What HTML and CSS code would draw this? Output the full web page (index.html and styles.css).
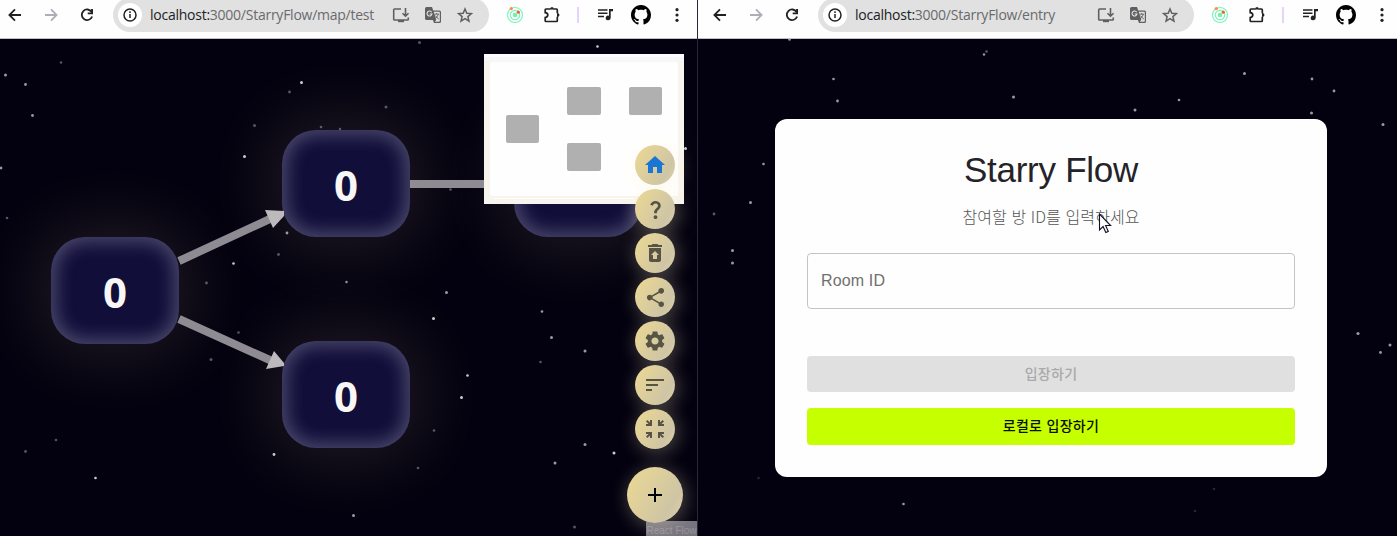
FILE: index.html
```html
<!DOCTYPE html>
<html lang="ko">
<head>
<meta charset="utf-8">
<title>Starry Flow</title>
<link rel="stylesheet" href="styles.css">
</head>
<body>
<svg width="0" height="0" class="defs" aria-hidden="true">
  <symbol id="back" viewBox="0 0 24 24"><path d="M18 12H6.8M12 6.400l-5.600 5.600 5.600 5.600" fill="none" stroke="currentColor" stroke-width="1.800"/></symbol>
  <symbol id="fwd" viewBox="0 0 24 24"><path d="M6 12h11.200M12 6.400l5.600 5.600-5.600 5.600" fill="none" stroke="currentColor" stroke-width="1.800"/></symbol>
  <symbol id="reload" viewBox="0 0 24 24"><path d="M16.600 9a5.300 5.300 0 1 0 .500 4.500" fill="none" stroke="currentColor" stroke-width="1.800"/><path d="M18 6v5.300h-5.300V9.500h3.400V6z" fill="currentColor"/></symbol>
  <symbol id="info" viewBox="0 0 24 24"><circle cx="12" cy="12" r="6" fill="none" stroke="currentColor" stroke-width="1.500"/><path d="M12 11v4M12 8.300v1.600" stroke="currentColor" stroke-width="1.500"/></symbol>
  <symbol id="install" viewBox="0 0 20 20"><path d="M10 4H3.500Q2.700 4 2.700 4.800v9.400q0 .8.8.8h13q.8 0 .8-.8V12.500M14.500 3v8M11.500 8.200l3 3 3-3" fill="none" stroke="currentColor" stroke-width="1.600"/><path d="M7 15h6v2.200H7z" fill="currentColor"/></symbol>
  <symbol id="translate" viewBox="0 0 20 20"><path d="M3.500 2H9l1.200 3.500H16.500q1.500 0 1.500 1.500v9.500q0 1.500-1.500 1.500H11L9.800 15H3.500Q2 15 2 13.500v-10Q2 2 3.500 2z" fill="currentColor"/><path d="M10.700 6.800h5.500q.6 0 .6.600v8.600q0 .7-.6.700h-4.300l1.400-1.900z" fill="#e0e0e0"/><path d="M8.700 7.200a2.500 2.500 0 1 0 .3 1.800H6.700" fill="none" stroke="#e8e8e8" stroke-width="1.100"/><path d="M11.500 9.200h4.600M13.700 8v1.200M15.300 9.400q-.7 2.600-3 4M12.700 10.700q1 2 3.200 3.400" fill="none" stroke="currentColor" stroke-width=".9"/></symbol>
  <symbol id="star" viewBox="0 0 20 20"><path d="M10 4l1.800 4.200 4.600.4-3.500 3 1.050 4.500L10 13.700l-3.950 2.400 1.050-4.500-3.500-3 4.600-.4z" fill="none" stroke="currentColor" stroke-width="1.500"/></symbol>
  <symbol id="orbit" viewBox="0 0 20 20"><g fill="none" stroke="#79f5bd" stroke-width="1.200"><circle cx="10" cy="10" r="7.500"/><circle cx="10" cy="10" r="4.700"/></g><circle cx="10" cy="10" r="2.300" fill="#6cf5a4"/><circle cx="6.300" cy="3.600" r="1.600" fill="#ff8a3c"/><circle cx="13.300" cy="7.200" r="1.600" fill="#f25c2e"/></symbol>
  <symbol id="puzzle" viewBox="0 0 20 20"><path d="M4 4h4.500M11.500 4h3q.8 0 .8.8v3.400M15.300 11.800v3.900q0 .8-.8.800H4q-.8 0-.8-.8v-3.200q2.600-.3 2.600-2.400T3.200 7.700V4.800Q3.200 4 4 4" fill="none" stroke="currentColor" stroke-width="1.700"/><path d="M8 4.500a2 2.500 0 0 1 4 0zM15 8a2.500 2 0 0 1 0 4z" fill="currentColor"/></symbol>
  <symbol id="music" viewBox="0 0 20 20"><path d="M3 5h9.500M3 8.300h9.500M3 11.600h6" stroke="currentColor" stroke-width="1.500"/><path d="M14 4h4v2.300h-2.300v6.500a2.500 2.300 0 1 1-1.700-2.100z" fill="currentColor"/></symbol>
  <symbol id="github" viewBox="0 0 16 16"><path fill="#000" d="M8 0C3.580 0 0 3.580 0 8c0 3.540 2.290 6.530 5.470 7.590.4.070.55-.17.55-.38 0-.19-.01-.82-.01-1.490-2.010.37-2.530-.49-2.690-.94-.09-.23-.48-.94-.82-1.130-.28-.15-.68-.52-.01-.53.63-.01 1.080.58 1.230.82.72 1.210 1.870.87 2.330.66.07-.52.28-.87.51-1.070-1.780-.2-3.640-.89-3.640-3.950 0-.87.31-1.590.82-2.150-.08-.2-.36-1.020.08-2.120 0 0 .67-.21 2.200.82.64-.18 1.320-.27 2-.27s1.360.09 2 .27c1.530-1.040 2.200-.82 2.200-.82.44 1.100.16 1.920.08 2.120.51.56.82 1.270.82 2.150 0 3.070-1.870 3.750-3.650 3.950.29.25.54.73.54 1.480 0 1.070-.01 1.930-.01 2.200 0 .21.15.46.55.38A8.010 8.010 0 0 0 16 8c0-4.420-3.580-8-8-8z"/></symbol>
  <symbol id="dots" viewBox="0 0 20 20"><g fill="currentColor"><circle cx="10" cy="4.700" r="1.600"/><circle cx="10" cy="10" r="1.600"/><circle cx="10" cy="15.300" r="1.600"/></g></symbol>
</svg>

<section class="window">
  <header class="toolbar">
    <svg class="nav"><use href="#back"/></svg><svg class="nav off"><use href="#fwd"/></svg><svg class="nav"><use href="#reload"/></svg>
    <div class="address">
      <svg class="site"><use href="#info"/></svg>
      <span class="url"><b>localhost:</b>3000/StarryFlow/map/test</span>
      <svg class="act"><use href="#install"/></svg><svg class="act"><use href="#translate"/></svg><svg class="act"><use href="#star"/></svg>
    </div>
    <div class="extras">
      <svg><use href="#orbit"/></svg><svg><use href="#puzzle"/></svg><i class="sep"></i><svg><use href="#music"/></svg><svg><use href="#github"/></svg><svg><use href="#dots"/></svg>
    </div>
  </header>
  <main class="sky map">
    <svg class="stars" viewBox="0 39 698 497">
      <g fill="#fff">
        <g opacity=".8"><circle cx="301.500" cy="82.500" r="1.500"/><circle cx="597.500" cy="46.500" r="1.300"/><circle cx="244.500" cy="156.500" r="1.500"/><circle cx="685.500" cy="148.500" r="1.500"/><circle cx="433.500" cy="318.500" r="1.500"/><circle cx="467.500" cy="375.500" r="1.300"/><circle cx="461.500" cy="397.500" r="1.500"/><circle cx="614" cy="453" r="1.500"/><circle cx="274" cy="454.500" r="1.400"/><circle cx="233.500" cy="263.500" r="1.300"/><circle cx="95.500" cy="478" r="1.300"/></g>
        <g opacity=".6"><circle cx="5.500" cy="75" r="1.500"/><circle cx="25.500" cy="84.500" r="1.400"/><circle cx="32.500" cy="115.500" r="1.400"/><circle cx="1" cy="168" r="1.400"/><circle cx="446.500" cy="292.500" r="1.500"/><circle cx="542" cy="311.500" r="1.300"/><circle cx="551.500" cy="337.500" r="1.500"/><circle cx="585" cy="351" r="1.500"/><circle cx="585" cy="444.500" r="1.500"/><circle cx="555" cy="463" r="1.500"/><circle cx="353.500" cy="515.500" r="1.500"/><circle cx="287" cy="233" r="1.400"/><circle cx="346.500" cy="282" r="1.200"/></g>
        <g opacity=".33"><circle cx="61" cy="62.500" r="1.300"/><circle cx="289.500" cy="92" r="1.400"/><circle cx="254.500" cy="125.500" r="1.500"/><circle cx="419.500" cy="42.500" r="1.500"/><circle cx="386" cy="107" r="1.500"/><circle cx="321" cy="127" r="1.300"/><circle cx="340" cy="129" r="1.200"/><circle cx="450.500" cy="189.500" r="1.300"/><circle cx="278.500" cy="254.500" r="1.400"/><circle cx="206.500" cy="283" r="1.400"/><circle cx="238.500" cy="332.500" r="1.300"/><circle cx="211" cy="359.500" r="1.500"/><circle cx="540.500" cy="362" r="1.300"/><circle cx="56" cy="440" r="1.300"/><circle cx="25.500" cy="451.500" r="1.400"/><circle cx="434" cy="430.500" r="1.300"/><circle cx="418" cy="468" r="1.300"/><circle cx="574.500" cy="527" r="1.500"/><circle cx="7" cy="218" r="1.300"/></g>
      </g>
    </svg>
    <div class="node n1">0</div><div class="node n2">0</div><div class="node n3">0</div><div class="node n4">0</div>
    <svg class="edges" viewBox="0 39 698 497">
      <g stroke="#8e8b93" stroke-width="8"><path d="M179 261L272 218M179 319L272 361M410 184H514"/></g>
      <path fill="#bcbabd" d="M265 210l19 1v5l-11 12zM274 351l10 12v3l-18 3z"/>
    </svg>
    <svg class="minimap" viewBox="0 0 200 150">
      <rect width="200" height="150" fill="#f8f5ee"/><path d="M0 0h200v3H0z" fill="#fdfdfd"/><path d="M0 3h200v4H0z" fill="#f7f7f9"/><rect x="6" y="8" width="188" height="134" rx="2" fill="#fefefe"/>
      <path d="M10 144.500h140" stroke="#fff" stroke-width="1"/>
      <g fill="#b0b0b0"><rect x="22" y="61" width="33" height="28" rx="2"/><rect x="83" y="33" width="34" height="28" rx="2"/><rect x="145" y="33" width="33" height="28" rx="2"/><rect x="83" y="89" width="34" height="28" rx="2"/></g>
    </svg>
    <span class="credit">React Flow</span>
    <div class="dial">
      <button class="fab home"><svg viewBox="0 0 24 24"><path d="M10 20v-6h4v6h5v-8h3L12 3 2 12h3v8z"/></svg></button>
      <button class="fab"><svg viewBox="0 0 24 24"><path d="M11.070 12.850c.77-1.390 2.250-2.210 3.110-3.440.91-1.290.4-3.700-2.180-3.700-1.690 0-2.520 1.280-2.870 2.340L6.540 6.960C7.250 4.830 9.180 3 11.990 3c2.350 0 3.960 1.070 4.780 2.410.7 1.150 1.110 3.300.03 4.900-1.200 1.770-2.350 2.310-2.970 3.450-.25.46-.35.76-.35 2.240h-2.890c-.01-.78-.13-2.050.48-3.150M14 20c0 1.100-.9 2-2 2s-2-.9-2-2 .9-2 2-2 2 .9 2 2"/></svg></button>
      <button class="fab"><svg viewBox="0 0 24 24"><path d="M6 7h12v12c0 1.100-.9 2-2 2H8c-1.100 0-2-.9-2-2zm4 7v4h4v-4h2l-4-4-4 4zM15.500 4l-1-1h-5l-1 1H5v2h14V4z" fill-rule="evenodd"/></svg></button>
      <button class="fab"><svg viewBox="0 0 24 24"><path d="M18 16.080c-.76 0-1.440.3-1.960.77L8.910 12.700c.05-.23.09-.46.09-.7s-.04-.47-.09-.7l7.050-4.110c.54.5 1.250.81 2.040.81 1.660 0 3-1.340 3-3s-1.340-3-3-3-3 1.340-3 3c0 .24.040.47.090.7L8.040 9.810C7.500 9.310 6.790 9 6 9c-1.660 0-3 1.340-3 3s1.340 3 3 3c.79 0 1.500-.31 2.040-.81l7.120 4.160c-.05.21-.08.43-.08.65 0 1.610 1.310 2.920 2.920 2.920s2.920-1.310 2.920-2.920-1.310-2.920-2.920-2.920"/></svg></button>
      <button class="fab"><svg viewBox="0 0 24 24"><path d="M19.140 12.940c.04-.3.060-.61.060-.94 0-.32-.02-.64-.07-.94l2.030-1.580c.18-.14.23-.41.120-.61l-1.920-3.320c-.12-.22-.37-.29-.59-.22l-2.390.96c-.5-.38-1.030-.7-1.620-.94l-.36-2.540c-.04-.24-.24-.41-.48-.41h-3.840c-.24 0-.43.17-.47.41l-.36 2.540c-.59.24-1.130.57-1.620.94l-2.390-.96c-.22-.08-.47 0-.59.22L2.740 8.870c-.12.21-.08.47.12.61l2.030 1.580c-.05.3-.09.63-.09.94s.02.64.070.94l-2.030 1.580c-.18.14-.23.41-.12.61l1.920 3.320c.12.22.37.29.59.22l2.390-.96c.5.38 1.030.7 1.620.94l.36 2.540c.05.24.24.41.48.41h3.840c.24 0 .44-.17.47-.41l.36-2.540c.59-.24 1.130-.56 1.620-.94l2.390.96c.22.080.47 0 .59-.22l1.920-3.320c.12-.22.070-.47-.12-.61zM12 15.600c-1.980 0-3.600-1.620-3.600-3.600s1.620-3.600 3.600-3.600 3.600 1.620 3.600 3.600-1.620 3.600-3.600 3.600"/></svg></button>
      <button class="fab"><svg viewBox="0 0 24 24"><path d="M3 18h6v-2H3zM3 6v2h18V6zm0 7h12v-2H3z"/></svg></button>
      <button class="fab"><svg viewBox="0 0 24 24"><path d="M9 9H3V7h2.600L3 4.400 4.400 3 7 5.600V3h2zM21 9h-6V3h2v2.600L19.600 3 21 4.400 18.400 7H21zM3 15h6v6H7v-2.600L4.400 21 3 19.600 5.600 17H3zM15 15h6v2h-2.600l2.600 2.600-1.400 1.400-2.600-2.600V21h-2z"/></svg></button>
      <button class="fab add"><svg viewBox="0 0 24 24"><path d="M19 13h-6v6h-2v-6H5v-2h6V5h2v6h6z"/></svg></button>
    </div>
  </main>
</section>

<section class="window second">
  <header class="toolbar">
    <svg class="nav"><use href="#back"/></svg><svg class="nav off"><use href="#fwd"/></svg><svg class="nav"><use href="#reload"/></svg>
    <div class="address">
      <svg class="site"><use href="#info"/></svg>
      <span class="url"><b>localhost:</b>3000/StarryFlow/entry</span>
      <svg class="act"><use href="#install"/></svg><svg class="act"><use href="#translate"/></svg><svg class="act"><use href="#star"/></svg>
    </div>
    <div class="extras">
      <svg><use href="#orbit"/></svg><svg><use href="#puzzle"/></svg><i class="sep"></i><svg><use href="#music"/></svg><svg><use href="#github"/></svg><svg><use href="#dots"/></svg>
    </div>
  </header>
  <main class="sky entry">
    <svg class="stars" viewBox="698 39 699 497">
      <g fill="#fff">
        <g opacity=".6"><circle cx="789.500" cy="39.500" r="1.300"/><circle cx="833.500" cy="79" r="1.300"/><circle cx="837.500" cy="101" r="1.400"/><circle cx="984" cy="54.500" r="1.200"/><circle cx="1013.500" cy="97" r="1.500"/><circle cx="1135" cy="110" r="1.500"/><circle cx="1179" cy="100" r="1.300"/><circle cx="1244.500" cy="73.500" r="1.500"/><circle cx="1312" cy="79" r="1.400"/><circle cx="1334" cy="91" r="1.400"/><circle cx="1311.500" cy="113" r="1.500"/><circle cx="1383" cy="124.500" r="1.500"/><circle cx="763.500" cy="164" r="1.300"/><circle cx="750.500" cy="202.500" r="1.500"/><circle cx="732.500" cy="250.500" r="1.500"/><circle cx="732.500" cy="263" r="1.500"/><circle cx="1358" cy="333.500" r="1.600"/><circle cx="1390" cy="345" r="1.500"/><circle cx="1380.500" cy="352.500" r="1.400"/><circle cx="903.500" cy="504" r="1.300"/></g>
        <g opacity=".35"><circle cx="714" cy="214" r="1.400"/><circle cx="986.500" cy="51.500" r="1.300"/></g>
        <g opacity=".15"><circle cx="1214" cy="489" r="1.300"/><circle cx="1195" cy="511" r="1.300"/><circle cx="758.500" cy="478" r="1.300"/></g>
      </g>
    </svg>
    <form class="card">
      <h1>Starry Flow</h1>
      <p>참여할 방 ID를 입력하세요</p>
      <div class="field">Room ID</div>
      <button type="button" class="btn disabled">입장하기</button>
      <button type="button" class="btn local">로컬로 입장하기</button>
    </form>
    <svg class="cursor" viewBox="0 0 14 21"><path d="M1.500 1v16l3.600-3.500 2.700 6 2.500-1.100-2.700-5.900h5z" fill="#fff" stroke="#101020" stroke-width="1.100"/></svg>
  </main>
</section>
</body>
</html>
```
FILE: styles.css
```css
* { box-sizing: border-box; }
body { margin: 0; display: flex; width: 1397px; height: 536px; overflow: hidden; background: #03000f; font-family: "Liberation Sans", "Noto Sans CJK KR", sans-serif; }
.defs { position: absolute; }
.window { display: flex; flex-direction: column; width: 698px; height: 536px; border-right: 1px solid #2a2836; overflow: hidden; }
.second { width: 699px; border-right: 0; }

.toolbar { display: flex; align-items: center; gap: 12px; height: 39px; flex: none; padding: 0 0 8px 3px; background: #fefefe; border-bottom: 1px solid #b9c3c4; color: #202124; }
.second .toolbar { padding-left: 10px; }
.nav { width: 24px; height: 24px; flex: none; }
.off { color: #b0adb8; }
.address { display: flex; align-items: center; flex: none; width: 376px; height: 34px; margin-left: 2px; padding: 0 14px 0 5px; border-radius: 17px; background: #e1e1e1; gap: 12px; }
.site { width: 24px; height: 24px; border-radius: 50%; background: #fff; margin-right: -4px; flex: none; }
.url { flex: 1; width: 0; font: 14px/20px "Open Sans", sans-serif; letter-spacing: -.25px; color: #6a6a6c; white-space: nowrap; }
.url b { font-weight: 400; color: #202124; }
.act { width: 20px; height: 20px; flex: none; color: #606064; }
.address .act { position: relative; }
.extras { display: flex; align-items: center; gap: 16px; margin-left: 4px; }
.extras svg { width: 20px; height: 20px; flex: none; }
.extras svg:nth-child(2) { margin-left: 1px; margin-right: -1px; }
.sep { width: 2px; height: 16px; background: #e6d3fa; }

.sky { position: relative; flex: 1; background: #03000f; overflow: hidden; }
.stars, .edges { position: absolute; left: 0; top: 0; height: 497px; width: 698px; }
.second .stars { width: 699px; }

/* Nodes sit on the free canvas */
.node { position: absolute; width: 128px; height: 107px; border-radius: 34px; display: flex; align-items: center; justify-content: center; padding-top: 2px; background: #110e3a; color: #f8f7f5; font: 700 42px/1 "Noto Sans", sans-serif; box-shadow: inset 0 0 18px 5px rgba(180, 180, 200, .36), 0 0 70px 16px rgba(255, 240, 190, .11); }
.n1 { left: 51px; top: 198px; }
.n2 { left: 282px; top: 91px; }
.n3 { left: 282px; top: 302px; }
.n4 { left: 514px; top: 91px; }

.minimap { position: absolute; left: 484px; top: 15px; width: 200px; height: 150px; }
.credit { position: absolute; right: 0; bottom: 0; width: 51px; height: 15px; background: #77747f; color: #96939b; font-size: 10px; line-height: 19px; text-align: center; white-space: nowrap; overflow: hidden; }
.dial { position: absolute; left: 627px; top: 106px; width: 56px; display: flex; flex-direction: column; align-items: center; gap: 4px; }
.fab { display: flex; align-items: center; justify-content: center; width: 40px; height: 40px; padding: 0; border: 0; border-radius: 50%; background: linear-gradient(120deg, #e7d596 15%, #cfc5a5 75%, #ddd3a9); box-shadow: 2px 3px 18px 2px rgba(255, 243, 200, .26); flex: none; }
.fab svg { width: 24px; height: 24px; fill: #575345; }
.fab:nth-child(2) svg, .fab:nth-child(4) svg { width: 23px; height: 23px; }
.fab.home svg { fill: #1976d2; }
.add { width: 56px; height: 56px; margin-top: 14px; }
.fab.add svg { fill: #000; }

.entry { padding: 80px 0 0 77px; }
.card { position: relative; display: flex; flex-direction: column; width: 552px; height: 358px; padding: 30px 32px 32px; border-radius: 12px; background: #fefefe; }
.card h1 { margin: 0; font-size: 35px; font-weight: 400; line-height: 42px; letter-spacing: -.25px; text-align: center; color: #242328; }
.card p { margin: 13px 0 0; font: 300 16px/24px "Noto Sans CJK KR", sans-serif; letter-spacing: .1px; text-align: center; color: #555; }
.field { height: 56px; margin-top: 25px; padding: 0 13px; border: 1px solid #c4c4c4; border-radius: 4px; font-size: 16px; line-height: 54px; letter-spacing: .15px; color: #707070; }
.btn { height: 36px; margin-top: 47px; padding: 0 0 3px; border: 0; border-radius: 4px; font: 500 14px/32px "Noto Sans CJK KR", sans-serif; letter-spacing: .3px; background: #e0e0e0; color: #a9a9a9; }
.btn.local { height: 37px; margin-top: 16px; padding-bottom: 4px; background: #c6ff00; color: #0c1000; }
.cursor { position: absolute; left: 400px; top: 174px; width: 14px; height: 21px; }
```
